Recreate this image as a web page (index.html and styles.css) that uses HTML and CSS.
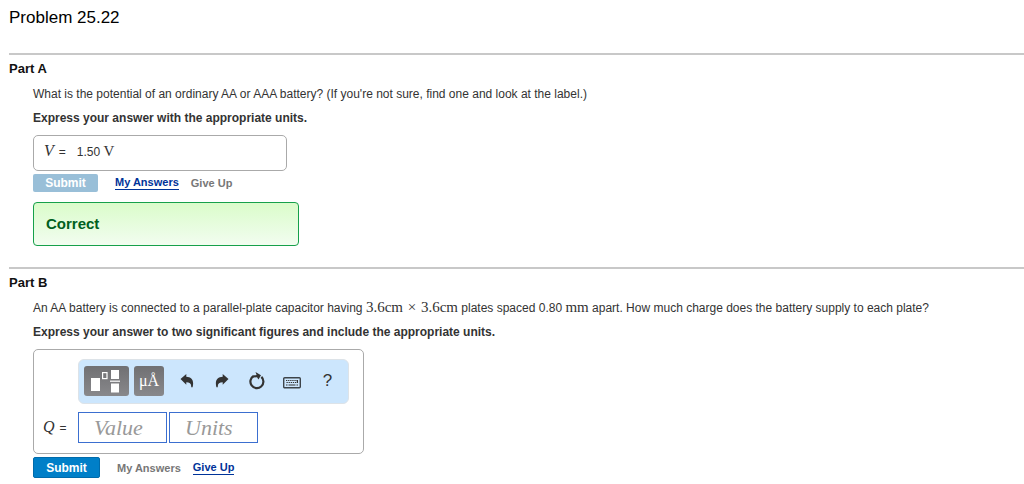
FILE: index.html
```
<!DOCTYPE html>
<html lang="en">
<head>
    <meta charset="UTF-8">
    <meta name="viewport" content="width=device-width, initial-scale=1.0">
    <title>Problem 25.22</title>
    <link rel="stylesheet" href="styles.css">
</head>
<body>
    <header>
        <h1>Problem 25.22</h1>
    </header>
    <main>
        <section class="part">
            <h2>Part A</h2>
            <div class="part-body">
                <p>What is the potential of an ordinary AA or AAA battery? (If you're not sure, find one and look at the label.)</p>
                <p class="instructions">Express your answer with the appropriate units.</p>
                <div class="answer-box answered">
                    <span class="variable">V</span>
                    <span class="equals">=</span>
                    <span class="answer-value">1.50 <span class="math">V</span></span>
                </div>
                <div class="actions">
                    <button class="submit-button" disabled>Submit</button>
                    <a href="#answers">My Answers</a>
                    <span class="inactive">Give Up</span>
                </div>
                <div class="feedback">Correct</div>
            </div>
        </section>
        <section class="part">
            <h2>Part B</h2>
            <div class="part-body">
                <p>An AA battery is connected to a parallel-plate capacitor having <span class="math">3.6cm <span class="times">×</span> 3.6cm</span> plates spaced 0.80 <span class="math">mm</span> apart. How much charge does the battery supply to each plate?</p>
                <p class="instructions">Express your answer to two significant figures and include the appropriate units.</p>
                <div class="answer-box editor">
                    <div class="toolbar">
                        <button class="template-button templates" aria-label="Templates">
                            <svg width="31" height="24" viewBox="0 0 31 24">
                                <rect x="0" y="9" width="9" height="13" fill="#fff"/>
                                <rect x="11.6" y="3.6" width="4.4" height="6" fill="none" stroke="#fff" stroke-width="1.2"/>
                                <rect x="20" y="1" width="8" height="9" fill="#fff"/>
                                <rect x="19" y="11.6" width="10" height="1.2" fill="#fff"/>
                                <rect x="20" y="14.5" width="8" height="9" fill="#fff"/>
                            </svg>
                        </button>
                        <button class="template-button symbols" aria-label="Unit symbols">μÅ</button>
                        <div class="tools">
                            <button class="tool" aria-label="Undo">
                                <svg width="14" height="14" viewBox="0 0 14 14">
                                    <path d="M0.5 5L6.3 0V2.7C11.5 2.8 14.4 6.2 12.6 13.3H11.2C11.5 9.8 9.7 8.3 6.3 8.3V10.8Z" fill="#333"/>
                                </svg>
                            </button>
                            <button class="tool" aria-label="Redo">
                                <svg width="14" height="14" viewBox="0 0 14 14">
                                    <path d="M13.5 5L7.7 0V2.7C2.5 2.8 -0.4 6.2 1.4 13.3H2.8C2.5 9.8 4.3 8.3 7.7 8.3V10.8Z" fill="#333"/>
                                </svg>
                            </button>
                            <button class="tool" aria-label="Reset">
                                <svg width="16" height="18" viewBox="0 0 16 18">
                                    <path d="M4.6 4A6.5 6.5 0 1 0 12.4 4.9" fill="none" stroke="#333" stroke-width="2.2"/>
                                    <path d="M6.5 0L12 3.2L9.5 7.5L8 5.2L4.2 5.6L4 3.6L7.6 3Z" fill="#333"/>
                                </svg>
                            </button>
                            <button class="tool keyboard" aria-label="Keyboard shortcuts">
                                <svg width="18" height="12" viewBox="0 0 18 12">
                                    <rect x="0.7" y="0.7" width="16.6" height="10" rx="1" fill="none" stroke="#3d444a" stroke-width="1.4"/>
                                    <path d="M3 3.5H15M3.5 5.5H14.5" stroke="#333" stroke-width="1.2" stroke-dasharray="1.3 0.8"/>
                                    <path d="M3 8H4.5M5.5 8H12.5M13.5 8H15M14.4 3V6" stroke="#333" stroke-width="1.2"/>
                                </svg>
                            </button>
                            <button class="tool help" aria-label="Help">?</button>
                        </div>
                    </div>
                    <div class="entry">
                        <label for="value"><span class="variable">Q</span> <span class="equals">=</span></label>
                        <input type="text" id="value" placeholder="Value">
                        <input type="text" id="units" placeholder="Units" aria-label="Units">
                    </div>
                </div>
                <div class="actions">
                    <button class="submit-button">Submit</button>
                    <span class="inactive">My Answers</span>
                    <a href="#give-up">Give Up</a>
                </div>
            </div>
        </section>
    </main>
</body>
</html>
```
FILE: styles.css
```
* {
    box-sizing: border-box;
}
body {
    font-family: "Liberation Sans", Arial, sans-serif;
    font-size: 12px;
    line-height: 18px;
    color: #333333;
    background-color: #ffffff;
    margin: 0;
    padding: 8px 0 0 9px;
}
h1 {
    font-size: 17px;
    font-weight: normal;
    line-height: 20px;
    color: #000000;
    margin: 0 0 25px;
}
h2 {
    font-size: 13px;
    line-height: 18px;
    color: #111111;
    margin: 0;
}
p {
    margin: 0 0 6px;
}
button {
    font-family: inherit;
    border: none;
    padding: 0;
    cursor: pointer;
}
.part {
    border-top: 2px solid #c8c8c8;
    padding-top: 5px;
    margin-bottom: 21px;
}
.part-body {
    padding: 7px 24px 0;
}
.instructions {
    font-weight: bold;
    margin-bottom: 8px;
}
.math {
    font-family: "Liberation Serif", "Times New Roman", serif;
    font-size: 15px;
    line-height: 16px;
}
.times {
    margin: 0 1px;
}
.answer-box {
    border: 1px solid #aaaaaa;
    border-radius: 5px;
}
.answered {
    display: flex;
    align-items: baseline;
    max-width: 254px;
    height: 36px;
    padding: 6px 10px;
}
.variable {
    font-family: "Liberation Serif", "Times New Roman", serif;
    font-style: italic;
    font-size: 16px;
}
.equals {
    margin-left: 5px;
}
.answer-value {
    margin-left: 11px;
}
.actions {
    display: flex;
    align-items: center;
    font-size: 11px;
    font-weight: bold;
    margin-top: 3px;
}
.actions a {
    color: #003399;
    line-height: 13px;
    text-decoration: none;
    border-bottom: 1px solid #003399;
}
.inactive {
    color: #777777;
}
.inactive + a,
a + .inactive {
    margin-left: 12px;
}
.submit-button {
    width: 67px;
    height: 21px;
    margin-right: 17px;
    border: 1px solid #006bab;
    border-radius: 2px;
    background-color: #007fc8;
    color: #ffffff;
    font-size: 12px;
    font-weight: bold;
}
.submit-button:disabled {
    width: 65px;
    height: 18px;
    border: none;
    background-color: #99bfd8;
    cursor: default;
}
.feedback {
    max-width: 266px;
    margin-top: 10px;
    padding: 12px;
    border: 1px solid #16a04a;
    border-radius: 4px;
    background: linear-gradient(#dafcca, #f2fdf0);
    color: #006020;
    font-size: 15px;
    font-weight: bold;
}
.editor {
    max-width: 331px;
    padding: 9px 14px 10px 9px;
}
.toolbar {
    display: flex;
    align-items: center;
    height: 45px;
    margin-left: 35px;
    padding: 0 3px 2px 5px;
    border: 1px solid #dde3e8;
    border-radius: 6px;
    background-color: #cce6fd;
}
.template-button {
    display: flex;
    align-items: center;
    justify-content: center;
    height: 30px;
    margin-right: 5px;
    border-radius: 3px;
    background: linear-gradient(#707073, #88888b);
    color: #ffffff;
}
.templates {
    width: 45px;
}
.symbols {
    width: 30px;
    font-family: "Liberation Serif", "Times New Roman", serif;
    font-size: 16px;
}
.tools {
    display: flex;
    flex: 1;
}
.tool {
    display: flex;
    flex: 1;
    align-items: center;
    justify-content: center;
    height: 20px;
    background: none;
    color: #333333;
}
.keyboard {
    padding-top: 4px;
}
.help {
    font-size: 17px;
}
.entry {
    display: flex;
    align-items: center;
    gap: 2px;
    margin-top: 8px;
}
.entry label {
    display: flex;
    align-items: baseline;
    width: 33px;
}
.entry input {
    width: 89px;
    height: 31px;
    padding: 0 15px;
    border: 1px solid #3b6fd0;
    border-radius: 0;
    font-family: "Liberation Serif", "Times New Roman", serif;
    font-style: italic;
    font-size: 22px;
}
.entry input::placeholder {
    color: #999999;
}
```
